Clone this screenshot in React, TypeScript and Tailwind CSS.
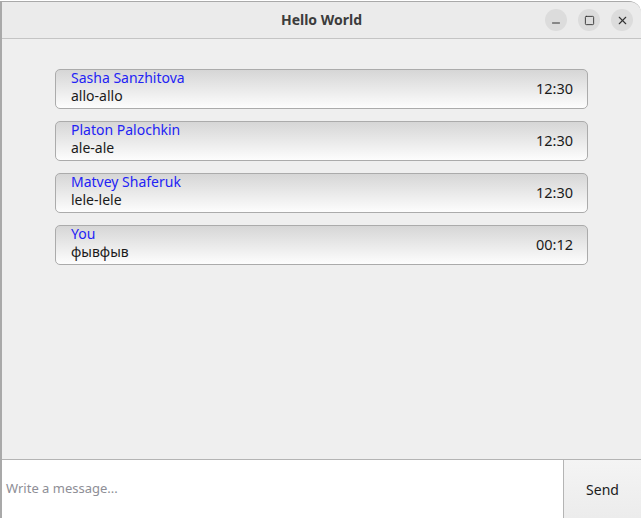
import { Minus, Square, X } from "lucide-react";

type Message = {
  author: string;
  text: string;
  time: string;
};

const messages: Message[] = [
  { author: "Sasha Sanzhitova", text: "allo-allo", time: "12:30" },
  { author: "Platon Palochkin", text: "ale-ale", time: "12:30" },
  { author: "Matvey Shaferuk", text: "lele-lele", time: "12:30" },
  { author: "You", text: "фывфыв", time: "00:12" },
];

const font = { fontFamily: '"Noto Sans", "Open Sans", sans-serif' };

const MessageCard = ({ msg }: { msg: Message }) => (
  <div className="flex h-[40px] items-center justify-between rounded-[5px] border border-[#ababab] bg-gradient-to-b from-[#d6d6d6] to-[#fdfdfd] pl-[15px] pr-[14px]">
    <div className="flex flex-col pb-[4px] leading-[18px]">
      <span className="text-[14px] text-[#2323f5]">{msg.author}</span>
      <span className="text-[14px] text-[#1a1a1a]">{msg.text}</span>
    </div>
    <span className="text-[14.5px] text-[#1a1a1a]">{msg.time}</span>
  </div>
);

const App = () => {
  return (
    <div className="h-[518px] w-[641px] overflow-hidden bg-white pt-[1px]" style={font}>
      <div className="flex h-[517px] flex-col overflow-hidden rounded-tr-[12px] border-l-2 border-t border-[#a9a9a9] bg-[#efefef]">
        {/* Title bar */}
        <div className="relative flex h-[37px] shrink-0 items-center justify-center border-b border-[#c4c4c4] bg-[#ebebeb] pb-[2px]">
          <span className="text-[14px] font-bold text-[#3c3c3c]">Hello World</span>
          <div className="absolute right-[8px] top-[7px] flex gap-[11px]">
            <button className="flex h-[22px] w-[22px] items-center justify-center rounded-full bg-[#dcdcdc]">
              <Minus className="mt-[5px] h-[12px] w-[12px] text-[#333]" strokeWidth={2} />
            </button>
            <button className="flex h-[22px] w-[22px] items-center justify-center rounded-full bg-[#dcdcdc]">
              <Square className="h-[11px] w-[11px] text-[#333]" strokeWidth={2} />
            </button>
            <button className="flex h-[22px] w-[22px] items-center justify-center rounded-full bg-[#dcdcdc]">
              <X className="h-[13px] w-[13px] text-[#333]" strokeWidth={2} />
            </button>
          </div>
        </div>

        {/* Messages */}
        <div className="flex flex-1 flex-col gap-[12px] pl-[53px] pr-[53px] pt-[30px]">
          {messages.map((m, i) => (
            <MessageCard key={i} msg={m} />
          ))}
        </div>

        {/* Input */}
        <div className="flex h-[59px] shrink-0 border-t border-[#b4b4b4]">
          <div className="flex flex-1 items-center bg-white pl-[4px]">
            <span className="text-[13px] text-[#8e8e96]">Write a message...</span>
          </div>
          <button className="w-[78px] border-l border-[#b4b4b4] bg-gradient-to-b from-[#f4f4f4] to-[#ececec] text-[14px] text-[#1a1a1a]">
            Send
          </button>
        </div>
      </div>
    </div>
  );
};

export default App;
